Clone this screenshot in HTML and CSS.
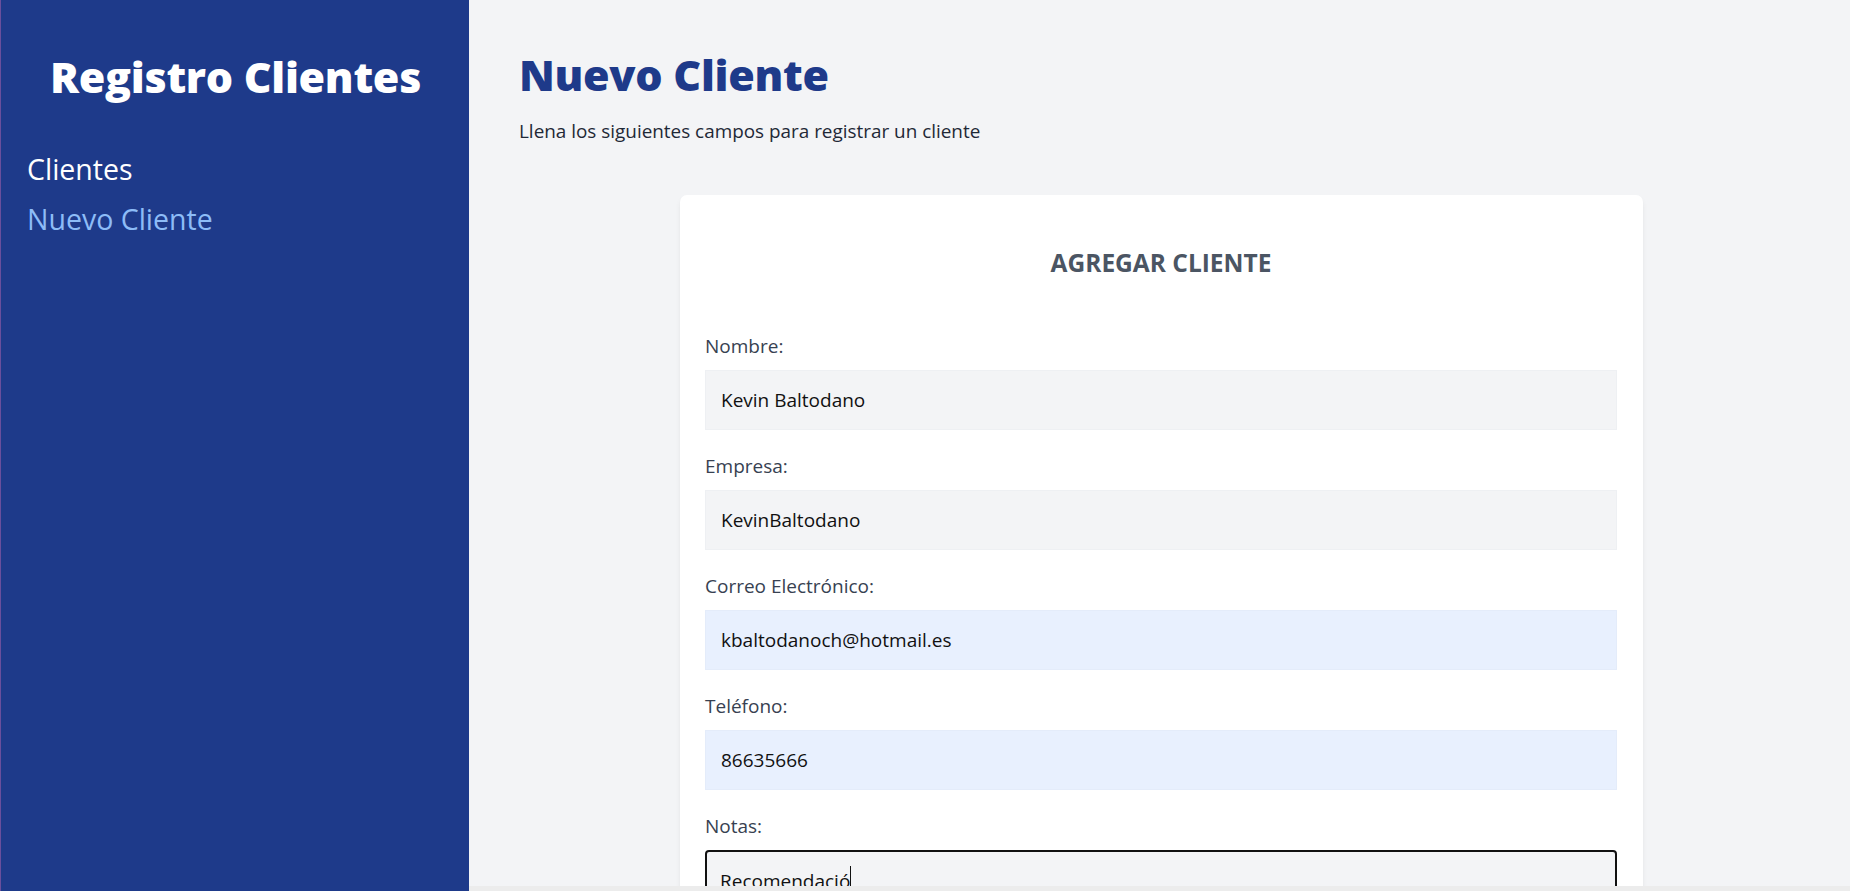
FILE: index.html
```html
<!DOCTYPE html>
<html lang="es">
<head>
<meta charset="utf-8">
<title>Registro Clientes - Nuevo Cliente</title>
<link rel="stylesheet" href="styles.css">
</head>
<body>
<div class="layout">
  <aside class="sidebar">
    <h2 class="brand">Registro Clientes</h2>
    <nav class="nav">
      <a class="nav-link" href="#">Clientes</a>
      <a class="nav-link active" href="#">Nuevo Cliente</a>
    </nav>
  </aside>
  <div class="main-col">
    <main class="main">
      <h1 class="page-title">Nuevo Cliente</h1>
      <p class="page-sub">Llena los siguientes campos para registrar un cliente</p>
      <section class="card">
        <h3 class="card-title">AGREGAR CLIENTE</h3>
        <form class="form">
          <div class="field">
            <label class="label" for="nombre">Nombre:</label>
            <input class="input" id="nombre" type="text" value="Kevin Baltodano">
          </div>
          <div class="field">
            <label class="label" for="empresa">Empresa:</label>
            <input class="input" id="empresa" type="text" value="KevinBaltodano">
          </div>
          <div class="field">
            <label class="label" for="email">Correo Electrónico:</label>
            <input class="input autofilled" id="email" type="email" value="kbaltodanoch@hotmail.es">
          </div>
          <div class="field">
            <label class="label" for="telefono">Teléfono:</label>
            <input class="input autofilled" id="telefono" type="tel" value="86635666">
          </div>
          <div class="field">
            <label class="label" for="notas">Notas:</label>
            <div class="textarea-wrap">
              <textarea class="textarea" id="notas">Recomendació</textarea>
              <span class="caret"></span>
            </div>
          </div>
        </form>
      </section>
    </main>
    <div class="hscroll"></div>
  </div>
</div>
</body>
</html>
```

FILE: styles.css
```css
* { box-sizing: border-box; }

html, body {
  margin: 0;
  padding: 0;
  height: 100%;
}

body {
  font-family: "Open Sans", "Noto Sans", sans-serif;
  background: #f3f4f6;
  color: #1f2937;
  overflow: hidden;
}

.layout {
  display: flex;
  height: 891px;
}

.sidebar {
  width: 469px;
  flex-shrink: 0;
  background: #1e3a8a;
  border-left: 1px solid #6a4f9c;
  padding: 52px 25px 0 26px;
}

.brand {
  margin: 0;
  color: #ffffff;
  font-size: 43px;
  line-height: 50px;
  font-weight: 800;
  text-align: center;
  letter-spacing: -0.3px;
}

.nav {
  margin-top: 42px;
  display: flex;
  flex-direction: column;
}

.nav-link {
  display: block;
  color: #ffffff;
  text-decoration: none;
  font-size: 28.5px;
  line-height: 50px;
}

.nav-link.active {
  color: #8dbcf7;
}

.main-col {
  flex: 1;
  display: flex;
  flex-direction: column;
  min-width: 0;
}

.main {
  flex: 1;
  overflow: hidden;
  padding: 50px 50px 0 50px;
}

.hscroll {
  height: 5px;
  background: #ececec;
  flex-shrink: 0;
}

.page-title {
  margin: 0;
  color: #1e3a8a;
  font-size: 43px;
  line-height: 50px;
  font-weight: 800;
  letter-spacing: -0.3px;
}

.page-sub {
  margin: 16px 0 0 0;
  font-size: 18.9px;
  line-height: 30px;
  color: #1f2937;
}

.card {
  width: 963px;
  margin: 49px 0 0 161px;
  background: #ffffff;
  border-radius: 7px;
  box-shadow: 0 4px 6px -1px rgba(0,0,0,0.08), 0 2px 4px -2px rgba(0,0,0,0.06);
  padding: 50px 26px 40px 25px;
}

.card-title {
  margin: 0;
  text-align: center;
  font-size: 24.5px;
  line-height: 35px;
  font-weight: 700;
  color: #4b5563;
}

.form {
  margin-top: 51px;
}

.field {
  margin-bottom: 21px;
}

.label {
  display: block;
  font-size: 19px;
  line-height: 30px;
  color: #374151;
  margin-bottom: 9px;
}

.input {
  display: block;
  width: 100%;
  height: 60px;
  padding: 0 15px;
  border: 1px solid #eef0f3;
  background: #f3f4f6;
  font-family: inherit;
  font-size: 19px;
  color: #111111;
  outline: none;
}

.input.autofilled {
  background: #e8f0fe;
  border-color: #e4ecfa;
}

.textarea-wrap {
  position: relative;
}

.textarea {
  display: block;
  width: 100%;
  height: 120px;
  padding: 14px 13px;
  border: 2px solid #111111;
  border-radius: 4px;
  background: #f3f4f6;
  font-family: inherit;
  font-size: 19px;
  line-height: 30px;
  color: #111111;
  resize: none;
  outline: none;
}

.caret {
  position: absolute;
  left: 145px;
  top: 16px;
  width: 1px;
  height: 28px;
  background: #111111;
}
```
